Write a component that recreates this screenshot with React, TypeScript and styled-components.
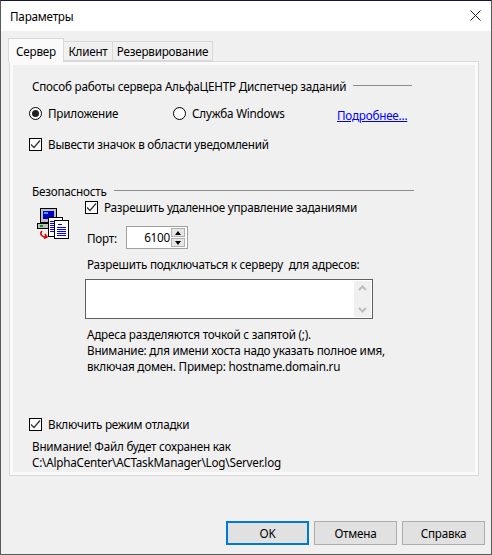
import React from "react";
import styled, { createGlobalStyle } from "styled-components";

const Global = createGlobalStyle`
  html, body { margin: 0; padding: 0; background: #f0f0f0; }
  * { box-sizing: border-box; }
`;

const Win = styled.div`
  width: 492px; height: 555px; display: flex; flex-direction: column;
  background: #f0f0f0; color: #000;
  font: 11.7px/16px "Noto Sans", sans-serif; letter-spacing: -0.22px;
  border: 1px solid #5a5a5a; border-top-color: #14143c;
`;
const TitleBar = styled.div`
  height: 30px; flex: none; background: #fff; display: flex; align-items: center;
  justify-content: space-between; padding: 0 10px 1px 9px;
`;
const TitleText = styled.span` font-size: 11.7px; `;
const TabStrip = styled.div`
  display: flex; align-items: flex-end; height: 30px; padding-left: 8px; flex: none; position: relative; z-index: 1;
`;
const Tab = styled.div<{ $active?: boolean; $w: number }>`
  width: ${p => p.$w}px; flex: none; display: flex; align-items: center; justify-content: center;
  border: 1px solid #d9d9d9; margin-left: -1px;
  height: 20px; background: #f0f0f0;
  ${p => (p.$active ? "background:#fafafa;margin-bottom:-1px;height:24px;border-bottom:none;" : "")}
`;
const Panel = styled.div`
  margin-left: 8px; width: 470px; height: 415px; flex: none;
  border: 1px solid #d9d9d9; box-shadow: inset 0 0 0 3px #fafafa;
  padding: 16px 0 0 22px; background: #f0f0f0;
`;
const GroupHead = styled.div<{ $end: number; $top?: number }>`
  display: flex; align-items: center; height: 16px; width: ${p => p.$end}px; gap: 7px;
  margin-top: ${p => p.$top ?? 0}px;
`;
const HeadLine = styled.div` flex: 1; height: 1px; background: #8c8c8c; margin-top: -2px; `;
const Row = styled.div<{ $top: number; $left?: number }>`
  display: flex; align-items: center; height: 16px;
  margin-top: ${p => p.$top}px; margin-left: ${p => p.$left ?? 0}px;
`;
const BoxMark = styled.span`
  width: 13px; height: 13px; border: 1px solid #000; background: #fff; flex: none;
  display: flex; align-items: center; justify-content: center; margin-right: 6px;
`;
const RadioMark = styled.span`
  width: 13px; height: 13px; border: 1px solid #000; border-radius: 50%; background: #fff; flex: none;
  display: flex; align-items: center; justify-content: center; margin-right: 6px;
`;
const RadioDot = styled.span` width: 7px; height: 7px; border-radius: 50%; background: #222; `;
const RadioItem = styled.div<{ $w: number }>` display: flex; align-items: center; width: ${p => p.$w}px; `;
const Link = styled.a` color: #0000ff; text-decoration: underline; margin-top: 4px; `;
const SecurityBody = styled.div` display: flex; `;
const IconCol = styled.div` width: 48px; flex: none; padding-top: 9px; margin-left: 5px; `;
const SecurityMain = styled.div` display: flex; flex-direction: column; `;
const PortRow = styled.div` display: flex; align-items: center; margin-top: 12px; height: 21px; padding-left: 2px; `;
const PortLabel = styled.span` width: 39px; `;
const Spin = styled.div`
  width: 62px; height: 23px; border: 1px solid #a0a0a0; background: #fff; display: flex; justify-content: space-between; padding: 1px 2px 1px 1px;
`;
const SpinValue = styled.span` flex: 1; text-align: right; padding-right: 1px; line-height: 19px; `;
const SpinBtns = styled.div` width: 14px; display: flex; flex-direction: column; gap: 1px; `;
const SpinBtn = styled.div`
  flex: 1; background: #e6e6e6; border: 1px solid #b0b0b0; display: flex; align-items: center; justify-content: center;
`;
const Arrow = styled.span<{ $down?: boolean }>`
  width: 0; height: 0; border-left: 3px solid transparent; border-right: 3px solid transparent;
  ${p => (p.$down ? "border-top: 4px solid #000;" : "border-bottom: 4px solid #000;")}
`;
const AddrBox = styled.div`
  width: 288px; height: 40px; margin-top: 7px; background: #fff; border: 1px solid #5f5f5f;
  display: flex; justify-content: flex-end; padding: 1px;
`;
const FakeScroll = styled.div`
  width: 17px; background: #f0f0f0; display: flex; flex-direction: column; align-items: center; justify-content: space-between; padding: 4px 0;
`;
const TextBlock = styled.div<{ $top: number; $left?: number }>`
  margin-top: ${p => p.$top}px; padding-left: ${p => p.$left ?? 0}px; line-height: 16px;
`;
const Footer = styled.div` display: flex; justify-content: flex-end; gap: 5px; padding: 45px 6px 0 0; `;
const Btn = styled.div<{ $def?: boolean }>`
  width: 83px; height: 24px; display: flex; align-items: center; justify-content: center;
  background: #e1e1e1; border: ${p => (p.$def ? "2px solid #0078d7" : "1px solid #adadad")};
`;

const Check = () => (
  <svg width="11" height="11" viewBox="0 0 11 11"><path d="M1 5.5 L4 8.5 L10 1.5" fill="none" stroke="#333" strokeWidth="1.2" /></svg>
);
const Chevron = ({ down }: { down?: boolean }) => (
  <svg width="9" height="6" viewBox="0 0 9 6"><path d={down ? "M1 1 L4.5 4.5 L8 1" : "M1 5 L4.5 1.5 L8 5"} fill="none" stroke="#bdbdbd" strokeWidth="2" /></svg>
);
const ServerIcon = () => (
  <svg width="32" height="31" viewBox="0 0 32 31" shapeRendering="crispEdges">
    <rect x="3.5" y="0.5" width="16" height="14" fill="#c0c0c0" stroke="#000" />
    <rect x="6" y="3" width="11" height="8" fill="#0000c0" />
    <rect x="7" y="4" width="4" height="2" fill="#40a0ff" />
    <rect x="0.5" y="15.5" width="18" height="5" fill="#c0c0c0" stroke="#000" />
    <rect x="3" y="17" width="3" height="2" fill="#00a000" />
    <rect x="11.5" y="9.5" width="14" height="19" fill="#fff" stroke="#000" />
    <path d="M13 13h4M13 15h4M13 17h4M13 19h4M13 21h4M13 23h4" stroke="#0000ff" />
    <rect x="17.5" y="12.5" width="14" height="18" fill="#fff" stroke="#000" />
    <path d="M21 16h4M20 19h9M20 21h9M20 23h9M20 25h9M20 27h9" stroke="#0000ff" />
    <path d="M5 23 C2 26 5 29 9 29 M8 26 L10 29 L7 30.5" fill="none" stroke="#e00000" strokeWidth="1.6" shapeRendering="auto" />
  </svg>
);

export default function App() {
  return (
    <Win>
      <Global />
      <TitleBar>
        <TitleText>Параметры</TitleText>
        <svg width="11" height="11" viewBox="0 0 11 11"><path d="M0.5 0.5 L10.5 10.5 M10.5 0.5 L0.5 10.5" stroke="#222" strokeWidth="1" /></svg>
      </TitleBar>
      <TabStrip>
        <Tab $active $w={56}>Сервер</Tab>
        <Tab $w={50}>Клиент</Tab>
        <Tab $w={101}>Резервирование</Tab>
      </TabStrip>
      <Panel>
        <GroupHead $end={380}>Способ работы сервера АльфаЦЕНТР Диспетчер заданий<HeadLine /></GroupHead>
        <Row $top={11} $left={-3}>
          <RadioItem $w={144}><RadioMark><RadioDot /></RadioMark>Приложение</RadioItem>
          <RadioItem $w={164}><RadioMark />Служба Windows</RadioItem>
          <Link>Подробнее...</Link>
        </Row>
        <Row $top={15} $left={-3}><BoxMark><Check /></BoxMark>Вывести значок в области уведомлений</Row>
        <GroupHead $end={382} $top={31}>Безопасность<HeadLine /></GroupHead>
        <SecurityBody>
          <IconCol><ServerIcon /></IconCol>
          <SecurityMain>
            <Row $top={0}><BoxMark><Check /></BoxMark>Разрешить удаленное управление заданиями</Row>
            <PortRow><PortLabel>Порт:</PortLabel><Spin><SpinValue>6100</SpinValue><SpinBtns><SpinBtn><Arrow /></SpinBtn><SpinBtn><Arrow $down /></SpinBtn></SpinBtns></Spin></PortRow>
            <Row $top={8} $left={2}>Разрешить подключаться к серверу&nbsp; для адресов:</Row>
            <AddrBox><FakeScroll><Chevron /><Chevron down /></FakeScroll></AddrBox>
            <TextBlock $top={7} $left={2}>Адреса разделяются точкой с запятой (;).<br />Внимание: для имени хоста надо указать полное имя,<br />включая домен. Пример: hostname.domain.ru</TextBlock>
          </SecurityMain>
        </SecurityBody>
        <Row $top={42} $left={-3}><BoxMark><Check /></BoxMark>Включить режим отладки</Row>
        <TextBlock $top={6}>Внимание! Файл будет сохранен как<br />C:\AlphaCenter\ACTaskManager\Log\Server.log</TextBlock>
      </Panel>
      <Footer>
        <Btn $def>OK</Btn>
        <Btn>Отмена</Btn>
        <Btn>Справка</Btn>
      </Footer>
    </Win>
  );
}
